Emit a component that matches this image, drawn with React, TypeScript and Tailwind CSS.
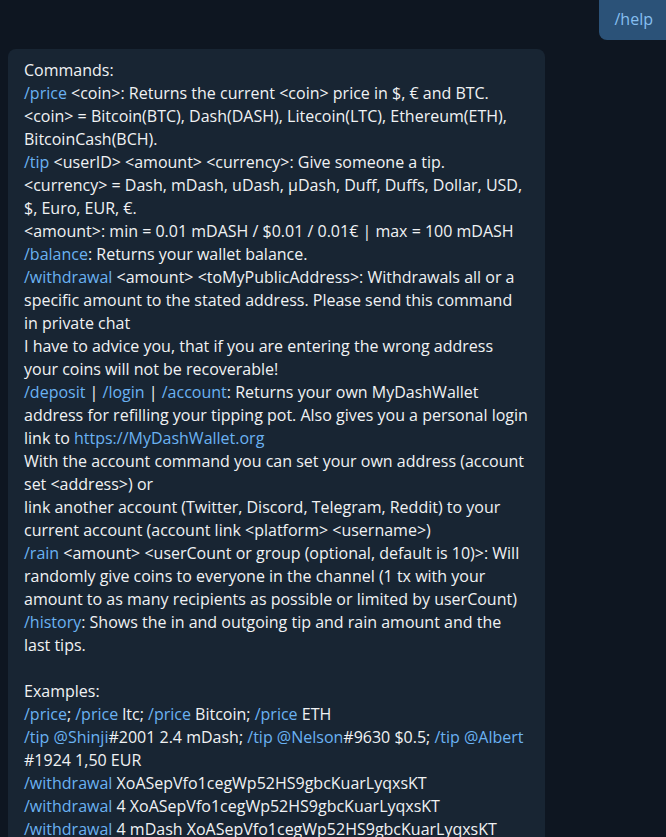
import React from 'react';

type Seg = { t: string; link?: boolean };

const L = (t: string): Seg => ({ t, link: true });
const T = (t: string): Seg => ({ t });

const lines: Seg[][] = [
  [T('Commands:')],
  [L('/price'), T(' <coin>: Returns the current <coin> price in $, € and BTC.')],
  [T('<coin> = Bitcoin(BTC), Dash(DASH), Litecoin(LTC), Ethereum(ETH),')],
  [T('BitcoinCash(BCH).')],
  [L('/tip'), T(' <userID> <amount> <currency>: Give someone a tip.')],
  [T('<currency> = Dash, mDash, uDash, µDash, Duff, Duffs, Dollar, USD,')],
  [T('$, Euro, EUR, €.')],
  [T('<amount>: min = 0.01 mDASH / $0.01 / 0.01€ | max = 100 mDASH')],
  [L('/balance'), T(': Returns your wallet balance.')],
  [L('/withdrawal'), T(' <amount> <toMyPublicAddress>: Withdrawals all or a')],
  [T('specific amount to the stated address. Please send this command')],
  [T('in private chat')],
  [T('I have to advice you, that if you are entering the wrong address')],
  [T('your coins will not be recoverable!')],
  [L('/deposit'), T(' | '), L('/login'), T(' | '), L('/account'), T(': Returns your own MyDashWallet')],
  [T('address for refilling your tipping pot. Also gives you a personal login')],
  [T('link to '), L('https://MyDashWallet.org')],
  [T('With the account command you can set your own address (account')],
  [T('set <address>) or')],
  [T('link another account (Twitter, Discord, Telegram, Reddit) to your')],
  [T('current account (account link <platform> <username>)')],
  [L('/rain'), T(' <amount> <userCount or group (optional, default is 10)>: Will')],
  [T('randomly give coins to everyone in the channel (1 tx with your')],
  [T('amount to as many recipients as possible or limited by userCount)')],
  [L('/history'), T(': Shows the in and outgoing tip and rain amount and the')],
  [T('last tips.')],
  [],
  [T('Examples:')],
  [L('/price'), T('; '), L('/price'), T(' ltc; '), L('/price'), T(' Bitcoin; '), L('/price'), T(' ETH')],
  [L('/tip @Shinji'), T('#2001 2.4 mDash; '), L('/tip @Nelson'), T('#9630 $0.5; '), L('/tip @Albert')],
  [T('#1924 1,50 EUR')],
  [L('/withdrawal'), T(' XoASepVfo1cegWp52HS9gbcKuarLyqxsKT')],
  [L('/withdrawal'), T(' 4 XoASepVfo1cegWp52HS9gbcKuarLyqxsKT')],
  [L('/withdrawal'), T(' 4 mDash XoASepVfo1cegWp52HS9gbcKuarLyqxsKT')],
];

export default function App() {
  return (
    <div
      className="h-[837px] w-[666px] overflow-hidden bg-[#0e1621] text-[16px] leading-[23px] text-[#f0f2f4]"
      style={{ fontFamily: '"Open Sans", "Noto Sans", sans-serif' }}
    >
      <div className="flex justify-end">
        <div className="mt-[-4px] rounded-bl-[8px] bg-[#2b5278] pl-4 pr-[13px] pt-[12px] pb-[9px] text-[#86bff0]">
          /help
        </div>
      </div>
      <div className="ml-2 mt-[9px] w-[537px] rounded-t-[8px] bg-[#182533] px-4 pt-[10px] pb-3">
        {lines.map((segs, i) => (
          <div key={i} className="h-[23px] whitespace-nowrap">
            {segs.map((s, j) =>
              s.link ? (
                <span key={j} className="text-[#6ab2f2]">
                  {s.t}
                </span>
              ) : (
                <span key={j}>{s.t}</span>
              )
            )}
          </div>
        ))}
      </div>
    </div>
  );
}
